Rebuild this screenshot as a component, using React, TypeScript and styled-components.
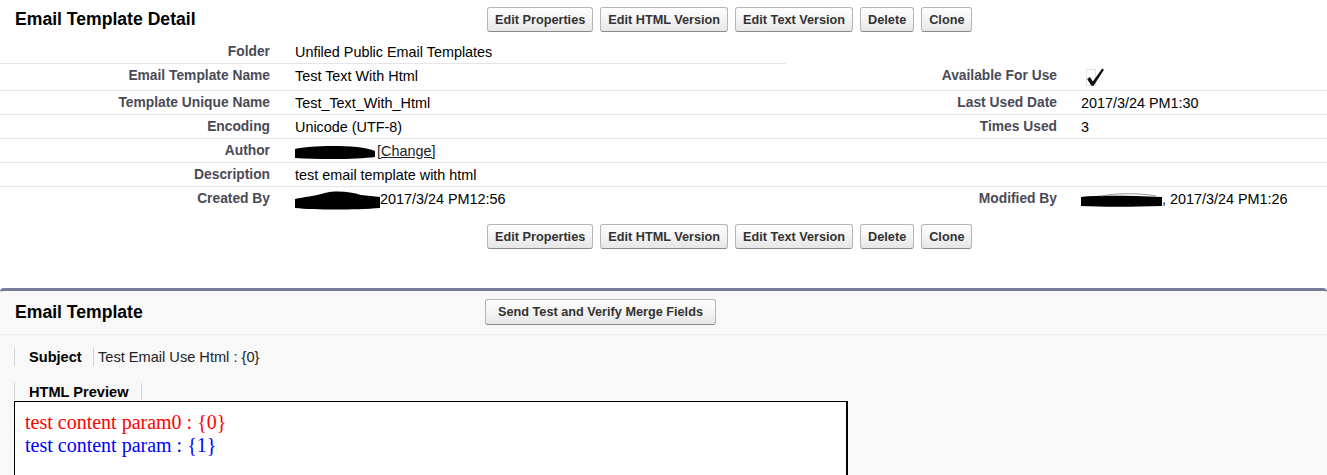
import styled, { createGlobalStyle } from 'styled-components'

const GlobalStyle = createGlobalStyle`
  body {
    margin: 0;
    background: #fff;
    font-family: 'Liberation Sans', Arial, sans-serif;
    color: #000;
  }
`

const Page = styled.div`
  width: 1327px;
  height: 475px;
  overflow: hidden;
`

/* ---------- detail block ---------- */
const DetailBlock = styled.div`
  background: #fff;
  padding-bottom: 39px;
`
const Header = styled.div<{ $h: number; $top: number }>`
  display: flex;
  align-items: flex-start;
  height: ${(p) => p.$h}px;
  padding-top: ${(p) => p.$top}px;
  box-sizing: border-box;
`
const Title = styled.h2<{ $w: number }>`
  margin: 0;
  width: ${(p) => p.$w}px;
  padding-left: 15px;
  box-sizing: border-box;
  font-size: 17.6px;
  line-height: 25px;
  font-weight: bold;
  color: #000;
`
const ButtonBar = styled.div<{ $indent?: number; $mt?: number }>`
  display: flex;
  gap: 7px;
  padding-left: ${(p) => p.$indent ?? 0}px;
  margin-top: ${(p) => p.$mt ?? 0}px;
`
const Button = styled.button<{ $h?: number; $pad?: number }>`
  font-family: inherit;
  font-weight: bold;
  font-size: 12.7px;
  color: #333;
  height: ${(p) => p.$h ?? 25}px;
  padding: 0 ${(p) => p.$pad ?? 7}px;
  border: 1px solid #b5b5b5;
  border-bottom-color: #8a8a8a;
  border-radius: 3px;
  background: linear-gradient(#fefefe, #f1f1f1 60%, #e6e6e6);
  white-space: nowrap;
`

const Row = styled.div`
  display: grid;
  grid-template-columns: 283px 503px 284px 1fr;
`
const Cell = styled.div<{ $last?: boolean }>`
  padding: 4px 0 3px;
  line-height: 16px;
  border-bottom: ${(p) => (p.$last ? 'none' : '1px solid #e6e6e8')};
  white-space: nowrap;
`
const Label = styled(Cell)`
  text-align: right;
  padding-right: 13px;
  font-size: 13.8px;
  font-weight: bold;
  color: #4a4a56;
`
const Value = styled(Cell)<{ $pad?: number }>`
  padding-left: ${(p) => p.$pad ?? 12}px;
  font-size: 14.4px;
  color: #000;
`
const ChangeLink = styled.a`
  color: #222;
  text-decoration: underline;
  margin-left: 2px;
`
const Redact = styled.svg`
  display: inline-block;
  vertical-align: middle;
  margin: -6px 0;
`

/* ---------- email template block ---------- */
const TemplateBlock = styled.div`
  background: #f8f8f8;
  border-top: 3px solid #747e96;
  border-radius: 4px 4px 0 0;
  height: 200px;
`
const TemplateHeader = styled.div`
  display: flex;
  align-items: center;
  height: 42px;
  border-bottom: 1px solid #fdfdfd;
  box-shadow: 0 1px 0 #eeeeee;
`
const Body = styled.div`
  padding: 14px 0 0 14px;
`
const SubjectRow = styled.div`
  display: flex;
  height: 18px;
  align-items: center;
  font-size: 14.6px;
`
const SubjectLabel = styled.div`
  border-left: 1px solid #d4d4d4;
  height: 18px;
  line-height: 18px;
  padding-left: 14px;
  box-sizing: border-box;
  width: 79px;
  font-weight: bold;
`
const SubjectValue = styled.div`
  border-left: 1px solid #d4d4d4;
  height: 18px;
  line-height: 18px;
  padding-left: 4px;
  color: #222;
`
const Tab = styled.div`
  display: inline-block;
  margin-top: 17px;
  height: 17px;
  line-height: 18px;
  padding: 0 13px 0 14px;
  border-left: 1px solid #d4d4d4;
  border-right: 1px solid #d4d4d4;
  font-size: 14.6px;
  font-weight: bold;
  color: #000;
`
const Preview = styled.div`
  width: 834px;
  height: 120px;
  box-sizing: border-box;
  background: #fff;
  border: 1px solid #000;
  border-right-width: 2px;
  padding: 9px 10px;
  font-family: 'Liberation Serif', 'Times New Roman', serif;
  font-size: 20px;
  line-height: 23px;
`
const Line = styled.div<{ $color: string }>`
  color: ${(p) => p.$color};
`

const Checkbox = () => (
  <svg width="19" height="19" viewBox="0 0 19 19" style={{ display: 'block', marginLeft: 5 }}>
    <rect x="0.5" y="1.5" width="9" height="16" fill="none" stroke="#c8c8c8" strokeWidth="1" strokeDasharray="1 1" />
    <polygon points="1.2,11 4,9 6.8,13.4 16.2,0.4 18,1.8 7.6,17.8 5.4,17.8" fill="#111" />
  </svg>
)

const actions = ['Edit Properties', 'Edit HTML Version', 'Edit Text Version', 'Delete', 'Clone']

const App = () => {
  return (
    <Page>
      <GlobalStyle />
      <DetailBlock>
        <Header $h={40} $top={7}>
          <Title $w={487}>Email Template Detail</Title>
          <ButtonBar>
            {actions.map((a) => (
              <Button key={a}>{a}</Button>
            ))}
          </ButtonBar>
        </Header>

        <Row>
          <Label>Folder</Label>
          <Value>Unfiled Public Email Templates</Value>
        </Row>
        <Row>
          <Label>Email Template Name</Label>
          <Value>Test Text With Html</Value>
          <Label>Available For Use</Label>
          <Value $pad={11}>
            <Checkbox />
          </Value>
        </Row>
        <Row>
          <Label>Template Unique Name</Label>
          <Value>Test_Text_With_Html</Value>
          <Label>Last Used Date</Label>
          <Value $pad={11}>2017/3/24 PM1:30</Value>
        </Row>
        <Row>
          <Label>Encoding</Label>
          <Value>Unicode (UTF-8)</Value>
          <Label>Times Used</Label>
          <Value $pad={11}>3</Value>
        </Row>
        <Row>
          <Label>Author</Label>
          <Value>
            <Redact width="80" height="15" viewBox="0 0 80 15">
              <path d="M0 4 C12 1, 40 0, 62 2 C70 3, 76 4, 80 6 L80 12 C66 14, 30 15, 0 13 Z" fill="#000" />
            </Redact>
            <ChangeLink>[Change]</ChangeLink>
          </Value>
          <Label />
          <Value $pad={11} />
        </Row>
        <Row>
          <Label>Description</Label>
          <Value>test email template with html</Value>
          <Label />
          <Value $pad={11} />
        </Row>
        <Row>
          <Label $last>Created By</Label>
          <Value $last>
            <Redact width="85" height="19" viewBox="0 0 85 19">
              <path d="M0 8 C8 6, 20 5, 30 2 C42 -1, 56 1, 66 4 L85 6 L85 17 C60 19, 20 19, 0 17 Z" fill="#000" />
            </Redact>
            2017/3/24 PM12:56
          </Value>
          <Label $last>Modified By</Label>
          <Value $last $pad={11}>
            <Redact width="81" height="15" viewBox="0 0 81 15">
              <path d="M0 4 C20 2, 50 3, 81 4 L81 13 C50 14, 20 14, 0 13 Z" fill="#000" />
              <path d="M20 3 C35 0, 60 0, 75 3" stroke="#999" strokeWidth="1" fill="none" />
            </Redact>
            , 2017/3/24 PM1:26
          </Value>
        </Row>

        <ButtonBar $indent={487} $mt={14}>
          {actions.map((a) => (
            <Button key={a}>{a}</Button>
          ))}
        </ButtonBar>
      </DetailBlock>

      <TemplateBlock>
        <TemplateHeader>
          <Title $w={485}>Email Template</Title>
          <Button $h={26} $pad={12}>
            Send Test and Verify Merge Fields
          </Button>
        </TemplateHeader>
        <Body>
          <SubjectRow>
            <SubjectLabel>Subject</SubjectLabel>
            <SubjectValue>Test Email Use Html : {'{0}'}</SubjectValue>
          </SubjectRow>
          <Tab>HTML Preview</Tab>
          <Preview>
            <Line $color="#ff0000">test content param0 : {'{0}'}</Line>
            <Line $color="#0000ff">test content param : {'{1}'}</Line>
          </Preview>
        </Body>
      </TemplateBlock>
    </Page>
  )
}

export default App
